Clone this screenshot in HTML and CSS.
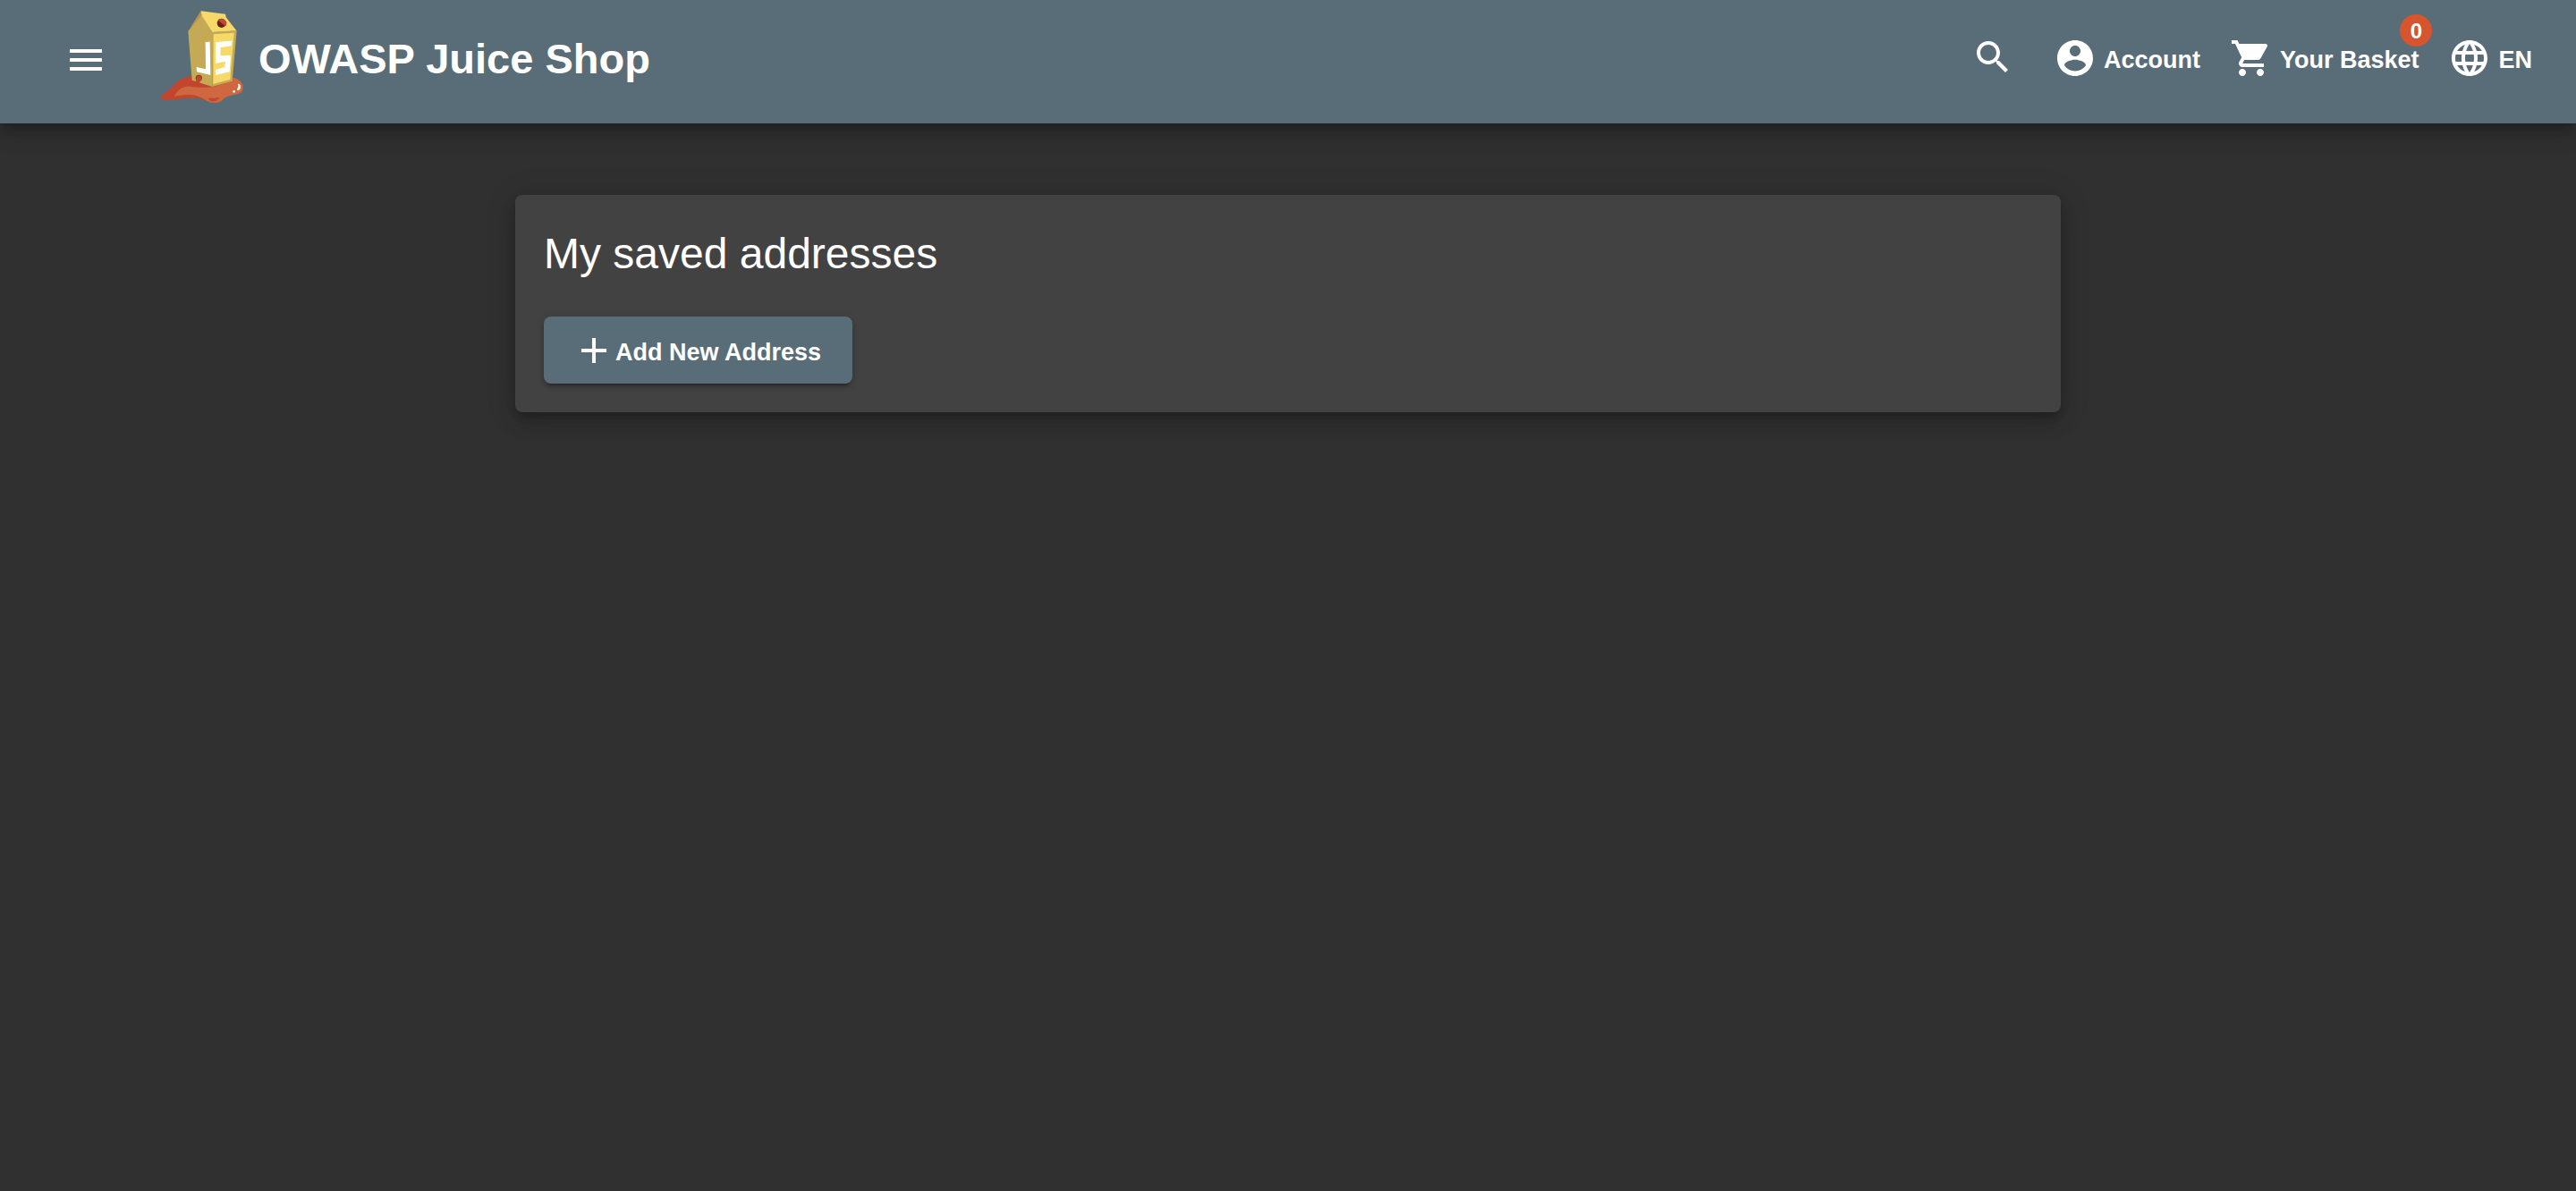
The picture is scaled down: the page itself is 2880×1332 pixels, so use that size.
FILE: index.html
```html
<!DOCTYPE html>
<html lang="en">
<head>
<meta charset="utf-8">
<title>OWASP Juice Shop</title>
<meta name="viewport" content="width=device-width, initial-scale=1">
<link rel="stylesheet" href="styles.css">
</head>
<body>
<header class="toolbar">
  <button class="tool menu-button" type="button" aria-label="Open menu">
    <svg class="icon" viewBox="0 0 24 24" aria-hidden="true"><path d="M3 18h18v-2H3v2zm0-5h18v-2H3v2zm0-7v2h18V6H3z"/></svg>
  </button>
  <a class="brand" href="#">
    <svg class="logo" viewBox="30 36 276 312" aria-hidden="true">
      <path fill="#c1452f" d="M30 326C32 314 55 306 66 293C80 273 105 257 136 256L202 290L270 262L286 267L180 338L160 330C135 327 92 331 66 335C42 337 29 334 30 326Z"/>
      <path fill="#cf683e" d="M74 324C84 302 105 288 128 290C160 295 190 294 210 290L270 270V260C286 262 305 274 305 293C305 309 294 316 277 317C258 320 243 327 233 338C224 347 198 347 185 339C164 326 150 319 126 318C108 317 88 321 74 324Z"/>
      <path fill="#c1452f" d="M189 332C193 326 212 329 218 335C214 342 193 341 189 332ZM209 331l10-4 9 3-7 4ZM124 286l11-5 12 5-10 4ZM66 326l6-3 6 3-6 4Z"/>
      <path fill="#b9924b" d="M164 36L121 104L126 96L168 60Z"/>
      <path fill="#c5aa55" d="M166 52L202 109V291L134 269L121 104Z"/>
      <path fill="#c5aa55" d="M201 108L284 103L269 272L202 291Z"/>
      <path fill="#f6d969" d="M164 37L246 47L248 58L283 103L202 108L167 54Z"/>
      <path fill="#f6d969" d="M206 115L275 110L262 267L205 282Z"/>
      <path fill="#fff" d="M179 141L194 140L196 252L150 241L149 225L180 232Z"/>
      <path fill="#fff" d="M213 141L268 137L266 154L230 159L229 187L264 185L260 241L213 252V234L244 225L246 206L213 213Z"/>
      <ellipse cx="233" cy="78" rx="15" ry="15" fill="#682119"/>
      <path fill="#c1452f" d="M221 68C228 59 239 61 248 71C252 77 250 84 246 88Z"/>
      <circle cx="157" cy="262" r="11" fill="#8f3927"/>
      <path fill="#c1452f" d="M150 258C158 251 167 256 166 264C164 273 158 277 154 284L148 289L143 281L149 269Z"/>
      <path fill="#fff" d="M288 282C294 279 299 290 296 297C293 304 284 305 285 298C289 294 291 289 288 282Z"/>
      <circle cx="275" cy="307" r="4" fill="#fff"/>
    </svg>
    <span class="label">OWASP Juice Shop</span>
  </a>
  <nav class="tools">
    <button class="tool search-button" type="button" aria-label="Search">
      <svg class="icon" viewBox="0 0 24 24" aria-hidden="true"><path d="M15.5 14h-.79l-.28-.27C15.41 12.59 16 11.11 16 9.5 16 5.91 13.09 3 9.5 3S3 5.91 3 9.5 5.91 16 9.5 16c1.61 0 3.09-.59 4.23-1.57l.27.28v.79l5 4.99L20.49 19l-4.99-5zm-6 0C7.01 14 5 11.99 5 9.5S7.01 5 9.5 5 14 7.01 14 9.5 11.99 14 9.5 14z"/></svg>
    </button>
    <button class="tool" type="button">
      <svg class="icon" viewBox="0 0 24 24" aria-hidden="true"><path d="M12 2C6.48 2 2 6.48 2 12s4.48 10 10 10 10-4.48 10-10S17.52 2 12 2zm0 3c1.66 0 3 1.34 3 3s-1.34 3-3 3-3-1.34-3-3 1.34-3 3-3zm0 14.200c-2.500 0-4.710-1.280-6-3.220.03-1.990 4-3.080 6-3.080 1.990 0 5.970 1.090 6 3.080-1.290 1.940-3.500 3.220-6 3.220z"/></svg>
      <span class="label">Account</span>
    </button>
    <button class="tool" type="button">
      <svg class="icon" viewBox="0 0 24 24" aria-hidden="true"><path d="M7 18c-1.100 0-1.990.9-1.990 2S5.900 22 7 22s2-.9 2-2-.9-2-2-2zM1 2v2h2l3.600 7.590-1.350 2.450c-.16.280-.25.610-.25.960 0 1.100.9 2 2 2h12v-2H7.420c-.14 0-.25-.11-.25-.25l.03-.12.900-1.630h7.450c.75 0 1.410-.41 1.750-1.030l3.580-6.490c.08-.14.120-.31.120-.48 0-.55-.45-1-1-1H5.210l-.94-2H1zm16 16c-1.100 0-1.990.9-1.990 2s.89 2 1.990 2 2-.9 2-2-.9-2-2-2z"/></svg>
      <span class="label">Your Basket</span>
      <span class="badge">0</span>
    </button>
    <button class="tool" type="button" aria-label="Language selection: EN">
      <svg class="icon" viewBox="0 0 24 24" aria-hidden="true"><path d="M11.990 2C6.470 2 2 6.480 2 12s4.470 10 9.990 10C17.520 22 22 17.520 22 12S17.520 2 11.990 2zm6.930 6h-2.950c-.32-1.250-.78-2.450-1.380-3.560 1.840.63 3.370 1.910 4.330 3.560zM12 4.040c.83 1.200 1.480 2.530 1.910 3.960h-3.820c.43-1.430 1.080-2.760 1.910-3.960zM4.260 14C4.100 13.360 4 12.690 4 12s.1-1.360.26-2h3.380c-.08.660-.14 1.320-.14 2s.06 1.340.14 2H4.260zm.82 2h2.950c.32 1.250.78 2.450 1.380 3.560-1.840-.63-3.370-1.900-4.330-3.560zm2.950-8H5.080c.96-1.660 2.490-2.930 4.330-3.560C8.810 5.550 8.350 6.750 8.030 8zM12 19.960c-.83-1.200-1.480-2.530-1.910-3.960h3.820c-.43 1.430-1.080 2.760-1.910 3.960zM14.340 14H9.660c-.09-.66-.16-1.320-.16-2s.07-1.350.16-2h4.680c.09.650.16 1.320.16 2s-.07 1.340-.16 2zm.25 5.560c.6-1.110 1.060-2.310 1.380-3.560h2.950c-.96 1.650-2.490 2.930-4.330 3.560zM16.360 14c.08-.66.14-1.320.14-2s-.06-1.340-.14-2h3.380c.16.640.26 1.310.26 2s-.1 1.360-.26 2h-3.380z"/></svg>
      <span class="label">EN</span>
    </button>
  </nav>
</header>
<main class="content">
  <section class="card">
    <h1 class="card-title">My saved addresses</h1>
    <button class="add-button" type="button">
      <svg class="icon" viewBox="0 0 24 24" aria-hidden="true"><path d="M19 13h-6v6h-2v-6H5v-2h6V5h2v6h6v2z"/></svg>
      <span class="label">Add New Address</span>
    </button>
  </section>
</main>
</body>
</html>
```
FILE: styles.css
```css
* {
  box-sizing: border-box;
}

body {
  margin: 0;
  min-height: 100vh;
  background: #303030;
  color: #fff;
  font-family: "Liberation Sans", Arial, sans-serif;
}

button {
  border: 0;
  color: inherit;
  font: bold 27px/32px "Liberation Sans", Arial, sans-serif;
  cursor: pointer;
}

.icon {
  display: block;
  flex: none;
  width: 48px;
  height: 48px;
  fill: currentColor;
}

.label {
  padding-top: 3px;
}

.toolbar {
  position: relative;
  display: flex;
  align-items: center;
  padding: 12px 49px 22px 72px;
  background: #596d78;
  box-shadow: 0 6px 10px -2px rgba(0, 0, 0, .2), 0 12px 20px rgba(0, 0, 0, .14), 0 2px 36px rgba(0, 0, 0, .12);
}

.tool {
  position: relative;
  display: flex;
  align-items: center;
  gap: 8px;
  padding: 0;
  background: none;
  white-space: nowrap;
}

.menu-button {
  padding-top: 6px;
}

.brand {
  display: flex;
  align-items: center;
  gap: 17px;
  margin-left: 60px;
  color: inherit;
  font-size: 47px;
  font-weight: bold;
  line-height: 56px;
  text-decoration: none;
  white-space: nowrap;
}

.logo {
  display: block;
  width: 92px;
  height: 104px;
}

.tools {
  display: flex;
  align-items: center;
  gap: 33px;
  margin-left: auto;
  padding-top: 2px;
}

.search-button {
  margin-right: 11px;
  padding-bottom: 2px;
}

.badge {
  position: absolute;
  top: -25px;
  right: -15px;
  width: 36px;
  height: 36px;
  border-radius: 50%;
  background: #d6552e;
  font-size: 24px;
  line-height: 38px;
  text-align: center;
}

.content {
  padding: 80px 20%;
}

.card {
  padding: 32px;
  border-radius: 8px;
  background: #424242;
  box-shadow: 0 6px 10px -2px rgba(0, 0, 0, .2), 0 12px 20px rgba(0, 0, 0, .14), 0 2px 36px rgba(0, 0, 0, .12);
}

.card-title {
  margin: 0 0 38px;
  padding-top: 2px;
  font-size: 48px;
  font-weight: normal;
  line-height: 64px;
}

.add-button {
  display: flex;
  align-items: center;
  padding: 14px 35px 13px 32px;
  border-radius: 8px;
  background: #596d78;
  box-shadow: 0 6px 2px -4px rgba(0, 0, 0, .2), 0 4px 4px rgba(0, 0, 0, .14), 0 2px 10px rgba(0, 0, 0, .12);
}
```
